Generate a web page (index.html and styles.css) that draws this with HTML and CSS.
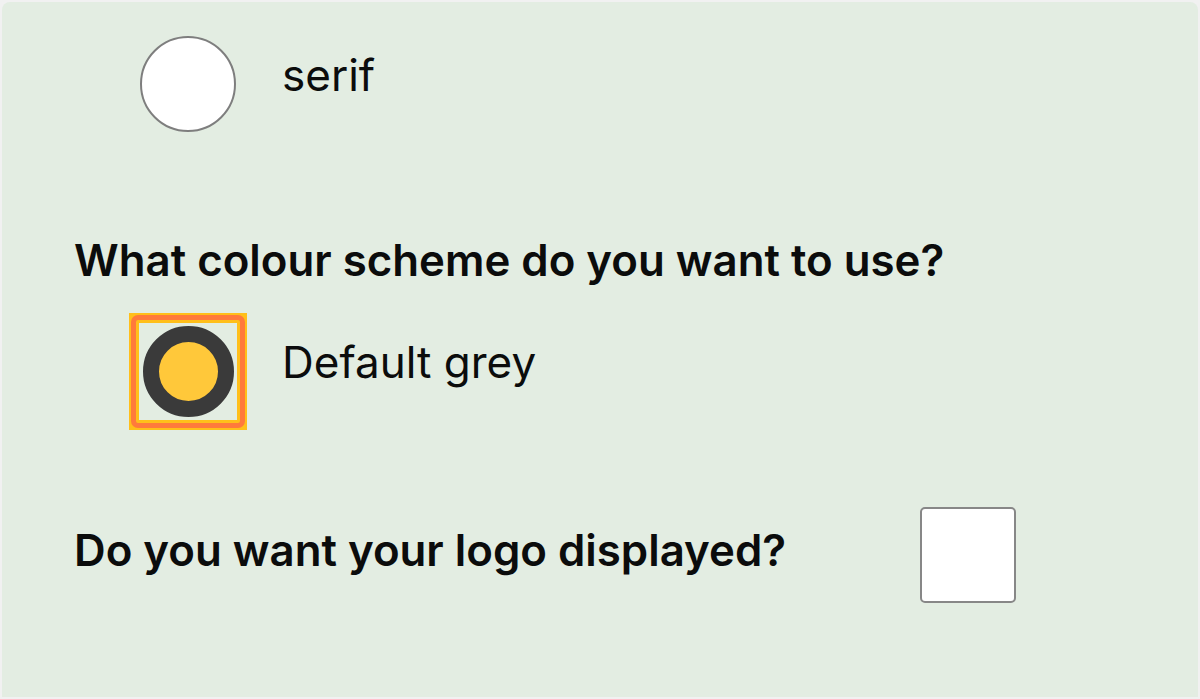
FILE: index.html
```html
<!DOCTYPE html>
<html lang="en">
<head>
<meta charset="utf-8">
<title>Settings</title>
<link rel="stylesheet" href="styles.css">
</head>
<body>
<main class="panel">
  <div class="radio-row">
    <span class="radio"></span>
    <span class="radio-label">serif</span>
  </div>

  <h2 class="question q-colour">What colour scheme do you want to use?</h2>

  <div class="radio-row radio-row-focus">
    <span class="focus-box">
      <span class="focus-ring">
        <span class="focus-inner">
          <span class="radio-checked"></span>
        </span>
      </span>
    </span>
    <span class="radio-label">Default grey</span>
  </div>

  <div class="check-row">
    <h2 class="question">Do you want your logo displayed?</h2>
    <span class="checkbox"></span>
  </div>
</main>
</body>
</html>
```
FILE: styles.css
```css
html, body {
  margin: 0;
  padding: 0;
}

body {
  background: #f1f1f1;
  font-family: "Inter", "Noto Sans", sans-serif;
  color: #0b0c0c;
  height: 699px;
  overflow: hidden;
}

.panel {
  margin: 2px;
  height: 695px;
  box-sizing: border-box;
  padding: 34px 0 0 72px;
  background: #e3ede2;
  border-radius: 8px 8px 0 0;
}

.radio-row {
  display: flex;
  align-items: flex-start;
  margin-left: 66px;
  height: 96px;
}

.radio {
  width: 96px;
  height: 96px;
  box-sizing: border-box;
  border: 2px solid #7e7e7e;
  border-radius: 50%;
  background: #ffffff;
  flex: none;
}

.radio-label {
  margin-left: 46px;
  margin-top: 13px;
  font-size: 44px;
  line-height: 52px;
  font-weight: 400;
}

.question {
  margin: 0;
  font-size: 43.8px;
  line-height: 52px;
  font-weight: 600;
}

.q-colour {
  margin-top: 103px;
}

.radio-row-focus {
  margin-top: 36px;
}

.focus-box {
  flex: none;
  margin: -10px -11px 0 -11px;
  padding: 2px;
  background: #ffbf1a;
  width: 118px;
  height: 117px;
  box-sizing: border-box;
  display: flex;
}

.focus-ring {
  flex: 1;
  border: 5px solid #ff7a3b;
  border-radius: 7px;
  background: #ffbf1a;
  padding: 3px;
  display: flex;
}

.focus-inner {
  flex: 1;
  background: #e3ede2;
  display: flex;
  align-items: center;
  justify-content: center;
}

.radio-checked {
  width: 91px;
  height: 91px;
  box-sizing: border-box;
  border-radius: 50%;
  border: 16px solid #3a3a3a;
  background: #ffc83a;
}

.check-row {
  display: grid;
  grid-template-columns: 846px 96px;
  align-items: start;
  margin-top: 88px;
}

.check-row .question {
  margin-top: 18px;
}

.checkbox {
  width: 96px;
  height: 96px;
  box-sizing: border-box;
  border: 2px solid #878787;
  border-radius: 5px;
  background: #ffffff;
}
```
